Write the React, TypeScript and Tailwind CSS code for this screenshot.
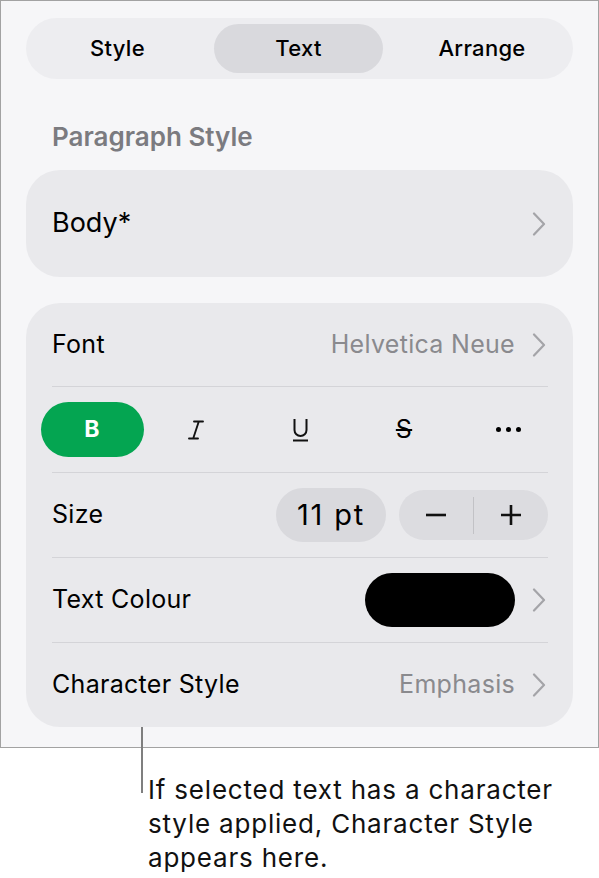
import React from 'react';

const Chevron = () => (
  <svg width="14" height="24" viewBox="0 0 14 24" fill="none" className="shrink-0">
    <path d="M2 1.5 L12 12 L2 22.5" stroke="#a4a4a8" strokeWidth="2.2" strokeLinecap="round" strokeLinejoin="round" />
  </svg>
);

const Divider = () => <div className="h-px bg-[#d4d4d8]" />;

export default function App() {
  return (
    <div className="relative w-[599px] h-[878px] bg-white font-['Inter',sans-serif] text-black">
      {/* Inspector panel */}
      <div className="h-[748px] border border-[#a2a2a2] bg-[#f6f6f8] px-[25px] pt-[17px]">
        {/* Segmented control */}
        <div className="flex h-[61px] items-center rounded-full bg-[#ededf0] px-[6px] text-[22px] font-medium tracking-[0.3px]">
          <div className="w-[171px] text-center">Style</div>
          <div className="ml-[11px] flex h-[49px] w-[169px] items-center justify-center rounded-full bg-[#d9d9dd]">Text</div>
          <div className="flex-1 pl-[14px] text-center">Arrange</div>
        </div>

        <div className="mt-[42px] pl-[26px] text-[26px] font-semibold leading-[31px] text-[#7b7b80]">Paragraph Style</div>

        {/* Paragraph style picker */}
        <div className="mt-[18px] flex h-[107px] items-center justify-between rounded-[34px] bg-[#e9e9ec] pl-[26px] pr-[27px]">
          <span className="text-[27px]">Body*</span>
          <Chevron />
        </div>

        {/* Text options card */}
        <div className="mt-[26px] rounded-[34px] bg-[#e9e9ec] pl-[26px] pr-[25px] text-[25px] tracking-[0.3px]">
          <div className="flex h-[83px] items-center justify-between">
            <span>Font</span>
            <div className="flex items-center gap-[17px] pr-[2px]">
              <span className="text-[#8a8a8e]">Helvetica Neue</span>
              <Chevron />
            </div>
          </div>
          <Divider />
          <div className="-mx-[12px] flex h-[85px] items-center">
            <div className="flex w-[104px] justify-center">
              <div className="flex h-[55px] w-[103px] items-center justify-center rounded-full bg-[#04a551] text-[23px] font-bold text-white">B</div>
            </div>
            <div className="flex w-[104px] justify-center">
              <svg width="16" height="20" viewBox="0 0 16 20" fill="none">
                <path d="M6 1.5 H15 M10.8 1.5 L5.2 18.5 M1 18.5 H10" stroke="#111" strokeWidth="1.9" strokeLinecap="round" />
              </svg>
            </div>
            <div className="flex w-[104px] justify-center">
              <svg width="17" height="24" viewBox="0 0 17 24" fill="none">
                <path d="M2.5 1 V12 A6 6 0 0 0 14.5 12 V1" stroke="#111" strokeWidth="2" />
                <path d="M1 22.5 H16" stroke="#111" strokeWidth="2" />
              </svg>
            </div>
            <div className="flex w-[104px] justify-center">
              <span className="text-[25px] leading-none line-through decoration-[1.5px]">S</span>
            </div>
            <div className="flex w-[104px] justify-center gap-[5px]">
              <div className="h-[5px] w-[5px] rounded-full bg-black" />
              <div className="h-[5px] w-[5px] rounded-full bg-black" />
              <div className="h-[5px] w-[5px] rounded-full bg-black" />
            </div>
          </div>
          <Divider />
          <div className="flex h-[84px] items-center justify-between">
            <span>Size</span>
            <div className="flex items-center gap-[13px]">
              <div className="flex h-[54px] w-[110px] items-center justify-center rounded-full bg-[#d9d9dd] text-[29px] tracking-[1.8px]">11 pt</div>
              <div className="flex h-[50px] w-[149px] items-center rounded-full bg-[#dcdce0]">
                <div className="flex flex-1 justify-center">
                  <svg width="22" height="22" viewBox="0 0 22 22"><path d="M1 11 H21" stroke="#111" strokeWidth="2.6" /></svg>
                </div>
                <div className="h-[37px] w-px bg-[#c2c2c6]" />
                <div className="flex flex-1 justify-center">
                  <svg width="22" height="22" viewBox="0 0 22 22"><path d="M1 11 H21 M11 1 V21" stroke="#111" strokeWidth="2.6" /></svg>
                </div>
              </div>
            </div>
          </div>
          <Divider />
          <div className="flex h-[84px] items-center justify-between">
            <span>Text Colour</span>
            <div className="flex items-center gap-[17px] pr-[2px]">
              <div className="h-[54px] w-[150px] rounded-full bg-black" />
              <Chevron />
            </div>
          </div>
          <Divider />
          <div className="flex h-[84px] items-center justify-between">
            <span>Character Style</span>
            <div className="flex items-center gap-[17px] pr-[2px]">
              <span className="text-[#8a8a8e]">Emphasis</span>
              <Chevron />
            </div>
          </div>
        </div>
      </div>

      {/* Callout */}
      <div className="absolute left-[141px] top-[727px] h-[66px] w-[2px] bg-[#7f7f7f]" />
      <div className="mt-[25px] pl-[148px] text-[26px] leading-[34px] tracking-[0.8px] whitespace-nowrap text-[#111]">
        If selected text has a character<br />
        style applied, Character Style<br />
        appears here.
      </div>
    </div>
  );
}
